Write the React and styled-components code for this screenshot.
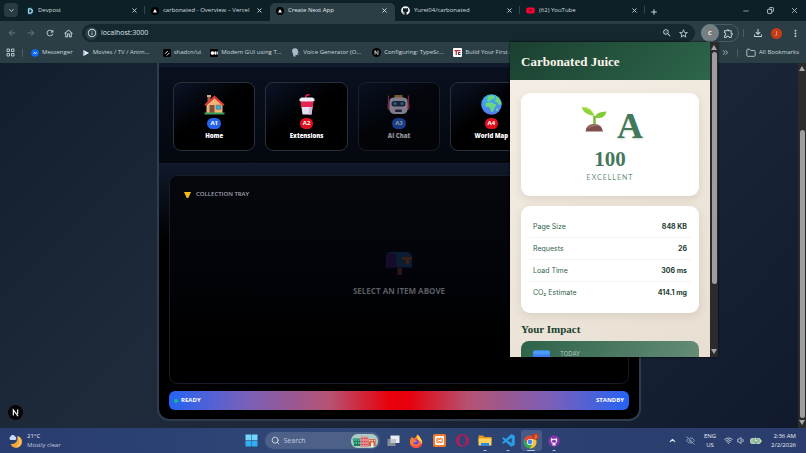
import React from "react";
import styled, { createGlobalStyle, css } from "styled-components";
import {
  MdArrowBack, MdArrowForward, MdRefresh, MdOutlineHome, MdInfoOutline, MdZoomOut,
  MdStarBorder, MdOutlineExtension, MdOutlineFileDownload, MdMoreVert,
} from "react-icons/md";
import { FaGithub, FaYoutube } from "react-icons/fa";
import { SiXampp, SiOpera } from "react-icons/si";
import { BiLogoVisualStudio } from "react-icons/bi";
import { X, Plus, Minus, ChevronDown, ChevronUp, ChevronsRight, Folder, EyeOff, Wifi, Volume1, Search, Copy } from "lucide-react";

const ui = `"Open Sans", "Noto Sans", sans-serif`;
const serif = `"Liberation Serif", serif`;
const sans = `Inter, "Liberation Sans", sans-serif`;

const GlobalStyle = createGlobalStyle`
  *, *::before, *::after { box-sizing: border-box; }
  body { margin: 0; background: #0f172a; font-family: ${ui}; font-size: 6px; line-height: 9px; }
  button { font: inherit; color: inherit; background: none; border: 0; padding: 0; }
  h1, h2, p, dl, dt, dd { margin: 0; }
  svg { display: block; flex: none; }
`;

const Desktop = styled.div`
  display: flex;
  flex-direction: column;
  height: 100vh;
  overflow: hidden;
  color: #d3dcdf;
`;

/* ---------- Browser chrome ---------- */
const Browser = styled.div`
  position: relative;
  flex: 1;
  min-height: 0;
  display: flex;
  flex-direction: column;
`;

const TabStrip = styled.div`
  display: flex;
  align-items: flex-end;
  height: 21px;
  background: #0d2028;
`;

const TabSearch = styled.button`
  display: grid;
  place-items: center;
  width: 14px;
  height: 14px;
  margin: 0 2px 4px 4px;
  border-radius: 4px;
  background: #283b43;
`;

const Tab = styled.div`
  position: relative;
  display: flex;
  align-items: center;
  gap: 4px;
  flex: 0 1 125px;
  min-width: 0;
  height: 18px;
  padding: 0 7px 3px 6px;
  border-radius: 5px 5px 0 0;
  ${(p) => p.$active && css`background: #2b3e46; color: #e3eaec;`}
  ${(p) => p.$divided && css`
    &::after { content: ""; position: absolute; right: 0; top: 3px; width: 1px; height: 8px; background: #34474f; }`}
`;

const TabTitle = styled.span`
  flex: 1;
  overflow: hidden;
  white-space: nowrap;
`;

const IconButton = styled.button`
  display: grid;
  place-items: center;
  width: ${(p) => p.$w || 19}px;
  height: 18px;
  color: ${(p) => (p.$dim ? "#64767e" : "#c9d3d7")};
`;

const WindowControls = styled.div`
  display: flex;
  height: 100%;
  align-items: center;
  margin-left: auto;
`;

const Toolbar = styled.div`
  display: flex;
  align-items: center;
  height: 22px;
  padding: 2px 1px 0 2px;
  background: #2b3e46;
`;

const AddressBar = styled.div`
  flex: 1;
  display: flex;
  align-items: center;
  height: 18px;
  margin: 0 6px 0 4px;
  padding: 0 3px;
  border-radius: 9px;
  background: #15272f;
`;

const SiteInfo = styled.button`
  display: grid;
  place-items: center;
  width: 13px;
  height: 13px;
  border-radius: 50%;
  background: #2b3e46;
`;

const AddressInput = styled.input`
  flex: 1;
  min-width: 0;
  height: 14px;
  padding: 0 0 0 3px;
  border: 0;
  outline: 0;
  background: none;
  color: #dbe3e6;
  font: 7px/14px ${ui};
`;

const ExtensionPill = styled.div`
  display: flex;
  align-items: center;
  width: 38px;
  height: 18px;
  border: 1px solid #4b5c63;
  border-radius: 9px;
`;

const ActiveExtension = styled.button`
  display: grid;
  place-items: center;
  flex: none;
  width: 18px;
  height: 18px;
  margin-left: -1px;
  border-radius: 50%;
  background: #728087;
`;

const ExtensionBadge = styled.span`
  width: 10px;
  height: 10px;
  border-radius: 3px;
  background: #7b7c7e;
  color: #f3f3f3;
  font-size: 6px;
  line-height: 10px;
  font-weight: 700;
  text-align: center;
`;

const Divider = styled.span`
  width: 1px;
  height: 8px;
  background: #4a5c64;
  margin: ${(p) => p.$m || "0"};
`;

const Avatar = styled.span`
  width: 11px;
  height: 11px;
  border-radius: 50%;
  background: #c43c15;
  color: #f8d8cc;
  font-size: 6px;
  line-height: 11px;
  text-align: center;
`;

const BookmarksBar = styled.nav`
  display: flex;
  align-items: center;
  height: 20px;
  padding: 0 7px 1px 6px;
  background: #2b3e46;
`;

const BookmarkList = styled.div`
  flex: 1;
  min-width: 0;
  display: flex;
  gap: 9px;
  overflow: hidden;
`;

const Bookmark = styled.a`
  display: flex;
  align-items: center;
  gap: 3px;
  flex: none;
  ${(p) => p.$truncated && css`width: 72px;`}
  color: #ccd6da;
  text-decoration: none;
  white-space: nowrap;
`;

/* ---------- Scrollbar ---------- */
const ScrollTrack = styled.div`
  display: flex;
  flex-direction: column;
  align-items: center;
  justify-content: space-between;
  flex: none;
  width: 8px;
  padding: 3px 0;
  background: #2b2b2c;
`;

const ScrollBody = styled.div`
  flex: 1;
  display: flex;
  flex-direction: column;
  margin: 2px 0;
`;

const ScrollThumb = styled.div`
  width: 5px;
  border-radius: 3px;
  background: #9d9d9d;
  flex: ${(p) => p.$size};
`;

const ScrollGap = styled.div`
  flex: ${(p) => p.$size};
`;

const Scrollbar = ({ before, thumb, after }) => (
  <ScrollTrack>
    <svg width="6" height="5" viewBox="0 0 6 5"><path d="M3 0l3 5H0z" fill="#a5a5a5" /></svg>
    <ScrollBody>
      <ScrollGap $size={before} />
      <ScrollThumb $size={thumb} />
      <ScrollGap $size={after} />
    </ScrollBody>
    <svg width="6" height="5" viewBox="0 0 6 5"><path d="M3 5l3-5H0z" fill="#a5a5a5" /></svg>
  </ScrollTrack>
);

/* ---------- Vending machine page ---------- */
const Viewport = styled.div`
  position: relative;
  flex: 1;
  min-height: 0;
  display: flex;
  background: linear-gradient(135deg, #121d2e 0%, #1f2b3b 38%, #1b2639 60%, #111a2d 100%);
`;

const Page = styled.main`
  flex: 1;
  min-width: 0;
  display: flex;
  padding-bottom: 7px;
`;

const Machine = styled.section`
  display: flex;
  flex-direction: column;
  width: 100%;
  max-width: 484px;
  margin: 0 auto;
  border: 2px solid #303c4d;
  border-top: 0;
  border-radius: 0 0 12px 12px;
  background: linear-gradient(180deg, #111a2c 0%, #0f1829 30%, #000 50%, #000 100%);
  overflow: hidden;
`;

const Shelf = styled.div`
  display: grid;
  grid-template-columns: repeat(5, 1fr);
  gap: 10px;
  margin-top: 4px;
  padding: 14px 14px 12px;
  background: linear-gradient(180deg, #0a101f, #04070e);
  border-top: 1px solid #0c1424;
  border-bottom: 1px solid #131d2f;
`;

const Slot = styled.button`
  display: flex;
  flex-direction: column;
  align-items: center;
  height: 69px;
  padding-top: 11px;
  border: 1px solid #2a303a;
  border-radius: 8px;
  background: linear-gradient(145deg, #0b1428 0%, #000 45%);
  color: #fff;
  opacity: ${(p) => (p.$faded ? 0.55 : 1)};
`;

const SlotCode = styled.span`
  margin: 3px 0;
  padding: 0 3px;
  border-radius: 6px;
  background: ${(p) => (p.$red ? "#e0101f" : "#2563eb")};
  font-weight: 700;
  line-height: 11px;
`;

const SlotName = styled.span`
  font-weight: 800;
`;

const Tray = styled.div`
  flex: 1;
  display: flex;
  flex-direction: column;
  margin: 11px 10px 7px;
  padding: 14px;
  border: 1px solid #171c26;
  border-radius: 8px;
  background: linear-gradient(180deg, #05070d 0%, #02040a 45%, #000 75%);
`;

const TrayTitle = styled.h2`
  display: flex;
  align-items: center;
  gap: 5px;
  font: 600 6px/9px ${ui};
  color: #a0a5ad;
`;

const TrayEmpty = styled.div`
  flex: 1;
  display: flex;
  flex-direction: column;
  align-items: center;
  justify-content: center;
  gap: 9px;
  padding-bottom: 20px;
  font: 700 8px/12px ${ui};
  color: #5a5d62;
`;

const StatusBar = styled.div`
  display: flex;
  align-items: center;
  gap: 3px;
  height: 19px;
  margin: 0 10px 9px;
  padding: 0 5px;
  border-radius: 6px;
  background: linear-gradient(90deg, #2563f5 0%, #7a60b8 17%, #b65272 35%, #e7000b 48%, #e7000b 52%, #b65272 65%, #7a60b8 83%, #2563f5 100%);
  color: #fff;
  font-weight: 700;
`;

const StatusDot = styled.span`
  width: 4px;
  height: 4px;
  border-radius: 50%;
  background: #12c08e;
`;

const StatusEnd = styled.span`
  margin-left: auto;
`;

const DevBadge = styled.button`
  position: absolute;
  left: 8px;
  bottom: 8px;
  display: grid;
  place-items: center;
  width: 15px;
  height: 15px;
  border-radius: 50%;
  background: #060608;
`;

/* ---------- Extension popup ---------- */
const Popup = styled.aside`
  position: absolute;
  z-index: 2;
  top: 42px;
  right: 88px;
  display: flex;
  width: 208px;
  height: 315px;
  box-shadow: 0 0 2px #000;
`;

const PopupContent = styled.div`
  flex: 1;
  overflow: hidden;
  background: linear-gradient(150deg, #f5efe6, #e8dfd2);
  font-family: ${sans};
`;

const PopupHeader = styled.header`
  padding: 12px 11px 10px;
  background: linear-gradient(135deg, #1b4030, #2d664b);
`;

const PopupTitle = styled.h1`
  font: 700 13px/16px ${serif};
  color: #faf5ec;
`;

const PopupBody = styled.div`
  display: flex;
  flex-direction: column;
  padding: 13px 11px 0;
  gap: 10px;
`;

const Card = styled.section`
  border-radius: 9px;
  background: #fff;
  box-shadow: 0 3px 9px #52422e1f;
`;

const ScoreCard = styled(Card)`
  display: flex;
  flex-direction: column;
  align-items: center;
  padding: 13px 0;
  color: #43775a;
`;

const Grade = styled.div`
  display: flex;
  align-items: flex-start;
  gap: 10px;
  padding-left: 4px;
  font: 700 36px/41px ${serif};
  text-shadow: 0 1px 2px #43775a44;
`;

const Score = styled.p`
  font: 700 21px/24px ${serif};
`;

const Verdict = styled.p`
  font: 7px/12px Lato, ${sans};
  letter-spacing: 1px;
  color: #6a8f7b;
`;

const Stats = styled(Card)`
  padding: 10px 8px 9px;
`;

const StatRow = styled.div`
  display: flex;
  justify-content: space-between;
  height: 22px;
  padding: 0 4px;
  border-bottom: ${(p) => (p.$last ? "0" : "1px solid #f4f4f2")};
  font-size: 7px;
  line-height: 22px;
  color: #2f5f49;
`;

const StatValue = styled.dd`
  font-weight: 700;
  color: #1b4030;
`;

const ImpactHeading = styled.h2`
  font: 700 11px/13px ${serif};
  color: #1b4030;
`;

const ImpactCard = styled.section`
  display: flex;
  gap: 10px;
  height: 50px;
  margin-top: -5px;
  padding: 8px 12px;
  border-radius: 8px 8px 0 0;
  background: linear-gradient(120deg, #2d6249, #6b917d);
  color: #b3c9bd;
  font-size: 6px;
`;

/* ---------- Taskbar ---------- */
const Taskbar = styled.footer`
  display: grid;
  grid-template-columns: 1fr auto 1fr;
  align-items: center;
  height: 25px;
  background: linear-gradient(90deg, #293c70, #304877 45%, #2c4070 75%, #2a3d6d);
  color: #e9edf5;
`;

const Weather = styled.button`
  display: flex;
  align-items: center;
  gap: 4px;
  padding-left: 9px;
  text-align: left;
`;

const Muted = styled.span`
  color: #c0c9dd;
`;

const Lines = styled.span`
  display: flex;
  flex-direction: column;
  text-align: ${(p) => p.$align || "left"};
`;

const Dock = styled.div`
  display: flex;
  align-items: center;
  padding-left: 4px;
`;

const SearchBox = styled.label`
  display: flex;
  align-items: center;
  gap: 4px;
  width: 115px;
  height: 17px;
  margin: 0 2px 0 7px;
  padding: 0 2px 0 6px;
  border-radius: 9px;
  background: #4c6088;
  overflow: hidden;
`;

const SearchInput = styled.input`
  flex: 1;
  min-width: 0;
  padding: 0;
  border: 0;
  background: none;
  font: 7px/14px ${ui};
  &::placeholder { color: #c5cee0; opacity: 1; }
`;

const DockApp = styled.button`
  position: relative;
  display: grid;
  place-items: center;
  width: 21px;
  height: 21px;
  margin: 0 1px;
  border-radius: 3px;
  background: ${(p) => (p.$active ? "#465a86" : "none")};
  ${(p) => p.$open && css`&::after {
    content: ""; position: absolute; bottom: 0; left: 50%; transform: translateX(-50%);
    width: ${p.$active ? 8 : 3}px; height: 1px; border-radius: 1px; background: #b9c6de;
  }`}
`;

const SystemTray = styled.div`
  display: flex;
  align-items: center;
  justify-content: flex-end;
  padding-right: 10px;
`;

const TrayItem = styled.button`
  display: grid;
  place-items: center;
  justify-items: ${(p) => (p.$end ? "end" : "center")};
  min-width: ${(p) => p.$w}px;
`;

/* ---------- Drawings ---------- */
const NextMark = ({ size = 9 }) => (
  <svg width={size} height={size} viewBox="0 0 18 18">
    <circle cx="9" cy="9" r="9" fill="#050505" />
    <path d="M6 13V5.500L12.500 14M12 5v6" stroke="#fff" strokeWidth="1.600" fill="none" />
  </svg>
);

const VercelMark = () => (
  <svg width="8" height="8" viewBox="0 0 16 16">
    <circle cx="8" cy="8" r="8" fill="#000" /><path d="M8 4l4 7H4z" fill="#fff" />
  </svg>
);

const DevpostMark = () => (
  <svg width="8" height="8" viewBox="0 0 16 16">
    <path d="M4 0h8l4 8-4 8H4L0 8z" fill="#08384c" />
    <path d="M5.500 3.500H8a4.500 4.500 0 010 9H5.500z" fill="none" stroke="#cdeefa" strokeWidth="2.200" />
  </svg>
);

const MessengerMark = () => (
  <svg width="8" height="8" viewBox="0 0 16 16">
    <circle cx="8" cy="8" r="7.500" fill="#0a6cff" /><path d="M3.500 10l3.300-4 2.600 2L13 6l-3.400 4L7 8z" fill="#fff" />
  </svg>
);

const PlayMark = () => (
  <svg width="8" height="8" viewBox="0 0 16 16"><path d="M3 2l11 6-11 6z" fill="#f2f2ff" /><path d="M3 2v12l4-6z" fill="#b9b6f5" /></svg>
);

const ShadcnMark = () => (
  <svg width="8" height="8" viewBox="0 0 16 16">
    <rect width="16" height="16" rx="3" fill="#000" /><path d="M4 9.500L9.500 4M7.500 13L13 7.500" stroke="#fff" strokeWidth="1.800" />
  </svg>
);

const MediumMark = () => (
  <svg width="8" height="8" viewBox="0 0 16 16">
    <rect width="16" height="16" rx="2" fill="#000" /><circle cx="5" cy="8" r="3.700" fill="#fff" />
    <ellipse cx="11" cy="8" rx="2.300" ry="3.700" fill="#fff" /><rect x="14" y="5" width="1.500" height="6" fill="#fff" />
  </svg>
);

const VoiceMark = () => (
  <svg width="9" height="9" viewBox="0 0 18 18">
    <path d="M2 7a6 6 0 0112-1l1 4-2 1v3H9v3H5l-1-5z" fill="#aab9c4" /><path d="M13 14a3 3 0 003-3" stroke="#6d818d" strokeWidth="1.500" fill="none" />
  </svg>
);

const TcMark = () => (
  <svg width="9" height="9" viewBox="0 0 18 18">
    <rect width="18" height="18" rx="2" fill="#fff" /><path d="M3 5h12M6.500 5v9" stroke="#d3232f" strokeWidth="2.500" />
    <path d="M15 9h-4v4h4" stroke="#282b46" strokeWidth="2" fill="none" />
  </svg>
);

const House = () => (
  <svg width="21" height="21" viewBox="0 0 42 42">
    <path d="M7 4h6v12H7z" fill="#9b6449" /><path d="M6 2h8v4H6z" fill="#e0a486" />
    <path d="M5 20L21 6l16 14v19H5z" fill="#f0b476" />
    <path d="M1 21L21 3l20 18-3 3L21 9 4 24z" fill="#dc3b35" />
    <rect x="11" y="22" width="10" height="17" fill="#80503f" /><rect x="24" y="22" width="10" height="9" fill="#39a5df" stroke="#9a684e" />
    <path d="M1 37h40v4H1z" fill="#3aa35a" />
  </svg>
);

const Cup = () => (
  <svg width="21" height="21" viewBox="0 0 42 42">
    <path d="M20 9V3l7-2" stroke="#e81c5a" strokeWidth="3" fill="none" />
    <path d="M9 12h26l-4 29H13z" fill="#e7def0" /><path d="M9 15h26l-1.500 11h-23z" fill="#e32456" />
    <path d="M7 10l4-3h22l4 3v4H7z" fill="#f4eef9" /><path d="M27 26h6l-2 15h-6z" fill="#cabbd8" />
  </svg>
);

const Robot = () => (
  <svg width="23" height="21" viewBox="0 0 46 42">
    <path d="M3 3v20M43 3v20" stroke="#d9345c" strokeWidth="2.500" />
    <rect x="1" y="17" width="44" height="15" rx="5" fill="#d9345c" /><path d="M15 2h16v6H15z" fill="#d79a35" />
    <path d="M5 12q2-5 8-5h20q6 0 8 5v20q-2 8-10 8H15q-8 0-10-8z" fill="#e2d8ee" />
    <rect x="9" y="14" width="28" height="11" rx="5" fill="#2d3552" />
    <circle cx="16" cy="19" r="3" fill="#48a9dd" /><circle cx="30" cy="19" r="3" fill="#48a9dd" />
    <rect x="16" y="31" width="14" height="5" rx="2" fill="#3c3350" />
  </svg>
);

const Globe = () => (
  <svg width="21" height="21" viewBox="0 0 42 42">
    <defs><linearGradient id="sea" x2="0" y2="1"><stop stopColor="#35b6e8" /><stop offset="1" stopColor="#577af2" /></linearGradient></defs>
    <circle cx="21" cy="21" r="20.500" fill="url(#sea)" />
    <path d="M14 5l8-3 6 3-2 5-6 1-3 4-5-1zM10 18l9-2 8 4 4 1-4 7-3 7-4 1-2-9-8-2-2-6zM30 4l7 6 4 9-4 4-4-5-6-4 3-4z" fill="#6ad680" />
    <path d="M32 28l3 2-3 5-2-3z" fill="#72df8e" />
  </svg>
);

const Mailbox = () => (
  <svg width="28" height="25" viewBox="0 0 56 50">
    <path d="M25 34h9v14h-9z" fill="#2a1618" />
    <path d="M11 2h31q12 0 12 12v19H2V13Q2 2 11 2z" fill="#0b1c33" />
    <path d="M3 33V14q0-10 10-10t10 10v19z" fill="#170b2a" />
    <path d="M34 12h20v5h-6v9h-7v-9h-7z" fill="#3c1f10" />
  </svg>
);

const Sprout = () => (
  <svg width="26" height="26" viewBox="0 0 52 52">
    <path d="M27 36V20" stroke="#78b83b" strokeWidth="5" />
    <path d="M27 20Q6 18 1 2q20-2 26 18z" fill="#8fd43e" /><path d="M1 2q17 2 23 12" stroke="#c4ec69" strokeWidth="2" fill="none" />
    <path d="M27 23q3-12 24-12-3 17-24 12z" fill="#84cb38" />
    <path d="M9 51q1-15 17-15t18 15z" fill="#7e4f4c" /><path d="M14 44q6-7 19-5" stroke="#a87069" strokeWidth="2.500" fill="none" />
  </svg>
);

const Calendar = () => (
  <svg width="17" height="17" viewBox="0 0 34 34">
    <rect y="3" width="34" height="31" rx="5" fill="#3d7cf0" /><rect y="3" width="34" height="8" rx="4" fill="#4b9aff" />
  </svg>
);

const Moon = () => (
  <svg width="14" height="14" viewBox="0 0 28 28">
    <path d="M17 4a12 12 0 11-14 16q15 2 14-16z" fill="#f2a73c" /><path d="M17 4a12 12 0 01-4 23q12-8 4-23z" fill="#ffc565" />
    <path d="M3 12a4 4 0 010-7 5 5 0 019 0 4 4 0 011 7z" fill="#c7dcff" />
  </svg>
);

const Windows = () => (
  <svg width="13" height="13" viewBox="0 0 26 26">
    <path d="M1 1h11.500v11.500H1zM13.500 1H25v11.500H13.500z" fill="#71d4fa" /><path d="M1 13.500h11.500V25H1zM13.500 13.500H25V25H13.500z" fill="#32aff0" />
  </svg>
);

const SearchArt = () => (
  <svg width="27" height="14" viewBox="0 0 54 28">
    <rect width="54" height="28" rx="13" fill="#a9cdc6" />
    <path d="M3 9h16v15H6z" fill="#15825f" /><path d="M4 12h14M4 18h14" stroke="#a6e3c4" strokeWidth="2" strokeDasharray="3 2" />
    <path d="M19 5h16v21H19z" fill="#e48c8e" /><path d="M21 9h12M21 15h12M21 21h12" stroke="#c33b45" strokeWidth="2" strokeDasharray="3 2" />
    <path d="M35 10h14v14H35z" fill="#d6563f" /><path d="M36 13h12" stroke="#ffe2bd" strokeWidth="3" strokeDasharray="3 2" />
    <path d="M40 17h5v9h-5z" fill="#fff2dd" />
  </svg>
);

const TaskView = () => (
  <svg width="13" height="12" viewBox="0 0 26 24"><rect x="7" y="1" width="18" height="15" fill="#e9edf2" /><rect x="1" y="8" width="16" height="14" fill="#858d99" /><rect x="7" y="8" width="10" height="8" fill="#c1c7cf" /></svg>
);

const Firefox = () => (
  <svg width="14" height="14" viewBox="0 0 28 28">
    <path d="M17 1q4 4 6 8 5 5 3 11a12.500 12.500 0 01-24-2Q1 10 6 5l2 4q4-2 5-1 0-4 4-7z" fill="#ff7a2c" />
    <path d="M17 1q4 4 6 8 4 5 3 10-2-5-6-6-5-4-3-12z" fill="#ffd84a" /><path d="M3 20q5 5 11 5t10-7q1 9-10 9Q6 27 3 20z" fill="#f52d5c" />
    <circle cx="14" cy="16" r="5.500" fill="#7446d6" /><path d="M8 13q5-1 8 1-4 3-7 2z" fill="#ff9a35" />
  </svg>
);

const Xampp = () => (
  <svg width="13" height="13" viewBox="0 0 26 26">
    <rect width="26" height="26" rx="4" fill="#f07a2b" />
    <SiXampp x="4" y="4" size={18} color="#fff" />
  </svg>
);

const Explorer = () => (
  <svg width="14" height="13" viewBox="0 0 28 26">
    <path d="M1 3h9l3 3h14v8H1z" fill="#e39b1c" /><path d="M1 9h26v14H1z" fill="#ffd25a" /><path d="M6 18h16v6H6z" fill="#2c8be0" />
  </svg>
);

const Chrome = () => (
  <svg width="16" height="16" viewBox="0 0 32 32">
    <circle cx="14" cy="18" r="13" fill="#34a853" />
    <path d="M2.700 11.500A13 13 0 0125 11.500H14L8.500 21z" fill="#ea4335" /><path d="M25.500 12a13 13 0 01-12 19l6-9.500L14 12z" fill="#fbc02d" />
    <circle cx="14" cy="18" r="6.200" fill="#fff" /><circle cx="14" cy="18" r="4.800" fill="#4285f4" />
    <circle cx="25" cy="7" r="6.500" fill="#c8391b" /><path d="M26 4v5q-1 2-3 1" stroke="#f6c8ba" strokeWidth="1.500" fill="none" />
  </svg>
);

const GithubDesktop = () => (
  <svg width="12" height="12" viewBox="0 0 24 24">
    <circle cx="12" cy="12" r="11.500" fill="#8435a8" />
    <path d="M9 21v-4q-4-2-3.500-6L6 6l3 1.500h6L18 6l.500 5q.500 4-3.500 6v4z" fill="#f4e8fa" />
    <ellipse cx="12" cy="12.500" rx="4.200" ry="3.200" fill="#8435a8" />
  </svg>
);

const Battery = () => (
  <svg width="12" height="9" viewBox="0 0 24 18">
    <rect x="1" y="5" width="20" height="10" rx="3" fill="#93c79a" stroke="#d5e4dd" strokeWidth="1.500" /><path d="M22 8v4" stroke="#d5e4dd" strokeWidth="2" />
    <path d="M12 1l-4 9h4l-1 6 5-8h-4z" fill="#fff" stroke="#3d6059" strokeWidth=".8" />
  </svg>
);

const Funnel = () => (
  <svg width="7" height="6" viewBox="0 0 14 12"><path d="M0 0h14L8.500 12h-3z" fill="#f7bd16" /></svg>
);

/* ---------- Data ---------- */
const tabs = [
  { title: "Devpost", icon: <DevpostMark />, divided: true },
  { title: "carbonated - Overview – Vercel", icon: <VercelMark /> },
  { title: "Create Next App", icon: <VercelMark />, active: true },
  { title: "Yurei04/carbonated", icon: <FaGithub size={9} color="#fff" />, divided: true },
  { title: "(62) YouTube", icon: <FaYoutube size={9} color="#ff0033" />, divided: true },
];

const bookmarks = [
  { title: "Messenger", icon: <MessengerMark /> },
  { title: "Movies / TV / Anim...", icon: <PlayMark />, truncated: true },
  { title: "shadcn/ui", icon: <ShadcnMark /> },
  { title: "Modern GUI using T...", icon: <MediumMark />, truncated: true },
  { title: "Voice Generator (O...", icon: <VoiceMark />, truncated: true },
  { title: "Configuring: TypeSc...", icon: <NextMark />, truncated: true },
  { title: "Build Your First A", icon: <TcMark />, truncated: true },
];

const slots = [
  { code: "A1", name: "Home", icon: <House /> },
  { code: "A2", name: "Extensions", icon: <Cup />, red: true },
  { code: "A3", name: "AI Chat", icon: <Robot />, faded: true },
  { code: "A4", name: "World Map", icon: <Globe />, red: true },
];

const stats = [
  ["Page Size", "848 KB"],
  ["Requests", "26"],
  ["Load Time", "306 ms"],
  ["CO₂ Estimate", "414.1 mg"],
];

const apps = [
  { name: "Task view", icon: <TaskView /> },
  { name: "Firefox", icon: <Firefox /> },
  { name: "XAMPP", icon: <Xampp /> },
  { name: "Opera GX", icon: <SiOpera size={13} color="#b31c58" /> },
  { name: "File Explorer", icon: <Explorer />, open: true },
  { name: "Visual Studio Code", icon: <BiLogoVisualStudio size={15} color="#2a9ee8" />, open: true },
  { name: "Chrome", icon: <Chrome />, open: true, active: true },
  { name: "GitHub Desktop", icon: <GithubDesktop />, open: true },
];

export default function App() {
  return (
    <Desktop>
      <GlobalStyle />
      <Browser>
        <TabStrip>
          <TabSearch aria-label="Search tabs"><ChevronDown size={7} strokeWidth={3} /></TabSearch>
          {tabs.map((t) => (
            <Tab key={t.title} $active={t.active} $divided={t.divided}>
              {t.icon}
              <TabTitle>{t.title}</TabTitle>
              <button aria-label={`Close ${t.title}`}><X size={7} strokeWidth={3} /></button>
            </Tab>
          ))}
          <IconButton $w={18} aria-label="New tab"><Plus size={8} strokeWidth={3} /></IconButton>
          <WindowControls>
            <IconButton $w={24} aria-label="Minimize"><Minus size={8} strokeWidth={2} /></IconButton>
            <IconButton $w={24} aria-label="Restore"><Copy size={7} strokeWidth={3} transform="scale(-1 1)" /></IconButton>
            <IconButton $w={24} aria-label="Close"><X size={9} strokeWidth={2} /></IconButton>
          </WindowControls>
        </TabStrip>

        <Toolbar>
          <IconButton $dim aria-label="Back"><MdArrowBack size={10} /></IconButton>
          <IconButton $dim aria-label="Forward"><MdArrowForward size={10} /></IconButton>
          <IconButton aria-label="Reload"><MdRefresh size={10} /></IconButton>
          <IconButton aria-label="Home"><MdOutlineHome size={11} /></IconButton>
          <AddressBar>
            <SiteInfo aria-label="Site information"><MdInfoOutline size={10} /></SiteInfo>
            <AddressInput aria-label="Address" defaultValue="localhost:3000" />
            <IconButton $w={17} aria-label="Zoom"><MdZoomOut size={10} /></IconButton>
            <IconButton $w={17} aria-label="Bookmark"><MdStarBorder size={11} /></IconButton>
          </AddressBar>
          <ExtensionPill>
            <ActiveExtension aria-label="Carbonated Juice"><ExtensionBadge>C</ExtensionBadge></ActiveExtension>
            <IconButton aria-label="Extensions"><MdOutlineExtension size={11} /></IconButton>
          </ExtensionPill>
          <Divider $m="0 4px" />
          <IconButton aria-label="Downloads"><MdOutlineFileDownload size={12} /></IconButton>
          <IconButton aria-label="Profile"><Avatar>J</Avatar></IconButton>
          <IconButton aria-label="Menu"><MdMoreVert size={11} /></IconButton>
        </Toolbar>

        <BookmarksBar>
          <svg width="9" height="9" viewBox="0 0 18 18"><path d="M2 2h5v5H2zM11 2h5v5h-5zM2 11h5v5H2zM11 11h5v5h-5z" fill="none" stroke="#b7c3c8" strokeWidth="2" /></svg>
          <Divider $m="0 8px 0 7px" />
          <BookmarkList>
            {bookmarks.map((b) => (
              <Bookmark key={b.title} href="#" $truncated={b.truncated}>{b.icon}{b.title}</Bookmark>
            ))}
          </BookmarkList>
          <ChevronsRight size={9} strokeWidth={2} />
          <Divider $m="0 8px 0 7px" />
          <Bookmark href="#"><Folder size={10} strokeWidth={2} />All Bookmarks</Bookmark>
        </BookmarksBar>

        <Viewport>
          <Page>
            <Machine>
              <Shelf>
                {slots.map((s) => (
                  <Slot key={s.code} $faded={s.faded}>
                    {s.icon}
                    <SlotCode $red={s.red}>{s.code}</SlotCode>
                    <SlotName>{s.name}</SlotName>
                  </Slot>
                ))}
              </Shelf>
              <Tray>
                <TrayTitle><Funnel />COLLECTION TRAY</TrayTitle>
                <TrayEmpty><Mailbox />SELECT AN ITEM ABOVE</TrayEmpty>
              </Tray>
              <StatusBar><StatusDot />READY<StatusEnd>STANDBY</StatusEnd></StatusBar>
            </Machine>
          </Page>
          <Scrollbar before={58} thumb={291} after={0} />
          <DevBadge aria-label="Next.js dev tools"><NextMark size={13} /></DevBadge>
        </Viewport>

        <Popup>
          <PopupContent>
            <PopupHeader><PopupTitle>Carbonated Juice</PopupTitle></PopupHeader>
            <PopupBody>
              <ScoreCard>
                <Grade><Sprout />A</Grade>
                <Score>100</Score>
                <Verdict>EXCELLENT</Verdict>
              </ScoreCard>
              <Stats as="dl">
                {stats.map(([k, v], i) => (
                  <StatRow key={k} $last={i === stats.length - 1}><dt>{k}</dt><StatValue>{v}</StatValue></StatRow>
                ))}
              </Stats>
              <ImpactHeading>Your Impact</ImpactHeading>
              <ImpactCard><Calendar />TODAY</ImpactCard>
            </PopupBody>
          </PopupContent>
          <Scrollbar before={0} thumb={233} after={63} />
        </Popup>
      </Browser>

      <Taskbar>
        <Weather><Moon /><Lines><span>21°C</span><Muted>Mostly clear</Muted></Lines></Weather>
        <Dock>
          <button aria-label="Start"><Windows /></button>
          <SearchBox>
            <Search size={9} strokeWidth={2} />
            <SearchInput placeholder="Search" aria-label="Search" />
            <SearchArt />
          </SearchBox>
          {apps.map((a) => (
            <DockApp key={a.name} aria-label={a.name} $open={a.open} $active={a.active}>{a.icon}</DockApp>
          ))}
        </Dock>
        <SystemTray>
          <TrayItem $w={18} aria-label="Hidden icons"><ChevronUp size={9} strokeWidth={3} /></TrayItem>
          <TrayItem $w={18} aria-label="Privacy"><EyeOff size={9} strokeWidth={2} color="#aab5cd" /></TrayItem>
          <TrayItem $w={22}><Lines $align="center"><span>ENG</span><span>US</span></Lines></TrayItem>
          <TrayItem $w={14} aria-label="Network"><Wifi size={9} strokeWidth={2} /></TrayItem>
          <TrayItem $w={12} aria-label="Volume"><Volume1 size={9} strokeWidth={2} /></TrayItem>
          <TrayItem $w={17} aria-label="Battery"><Battery /></TrayItem>
          <TrayItem $w={32} $end><Lines $align="right"><span>2:36 AM</span><span>2/2/2026</span></Lines></TrayItem>
        </SystemTray>
      </Taskbar>
    </Desktop>
  );
}
